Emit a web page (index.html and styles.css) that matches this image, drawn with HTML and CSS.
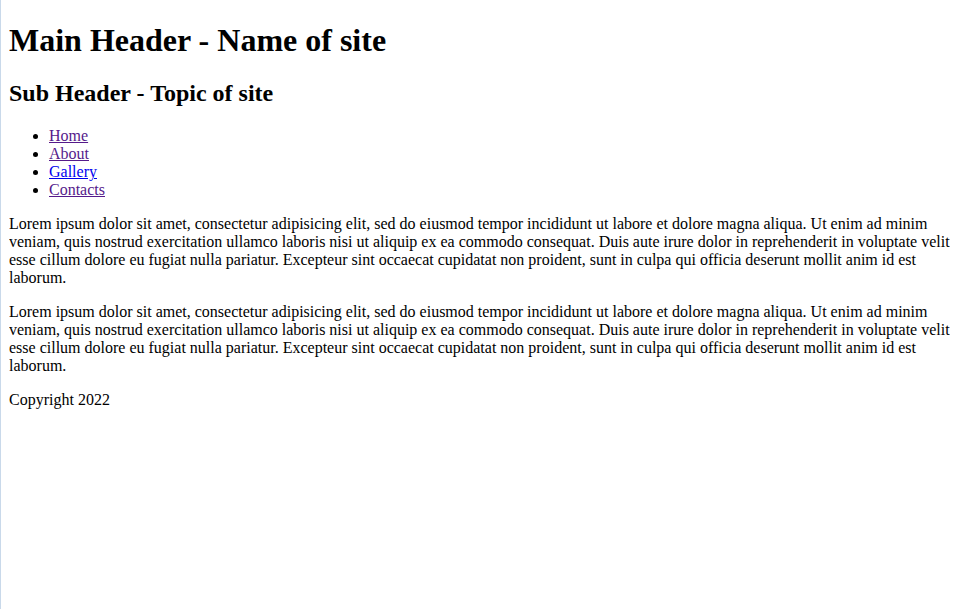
FILE: index.html
```html
<!DOCTYPE html>
<html lang="en">
<head>
<meta charset="utf-8">
<title>Name of site</title>
<link rel="stylesheet" href="styles.css">
</head>
<body>
<header>
<h1 class="site-title">Main Header - Name of site</h1>
<h2>Sub Header - Topic of site</h2>
<nav>
<ul>
<li><a class="visited" href="#home">Home</a></li>
<li><a class="visited" href="#about">About</a></li>
<li><a class="link" href="#gallery">Gallery</a></li>
<li><a class="visited" href="#contacts">Contacts</a></li>
</ul>
</nav>
</header>
<main>
<p>Lorem ipsum dolor sit amet, consectetur adipisicing elit, sed do eiusmod tempor incididunt ut labore et dolore magna aliqua. Ut enim ad minim veniam, quis nostrud exercitation ullamco laboris nisi ut aliquip ex ea commodo consequat. Duis aute irure dolor in reprehenderit in voluptate velit esse cillum dolore eu fugiat nulla pariatur. Excepteur sint occaecat cupidatat non proident, sunt in culpa qui officia deserunt mollit anim id est laborum.</p>
<p>Lorem ipsum dolor sit amet, consectetur adipisicing elit, sed do eiusmod tempor incididunt ut labore et dolore magna aliqua. Ut enim ad minim veniam, quis nostrud exercitation ullamco laboris nisi ut aliquip ex ea commodo consequat. Duis aute irure dolor in reprehenderit in voluptate velit esse cillum dolore eu fugiat nulla pariatur. Excepteur sint occaecat cupidatat non proident, sunt in culpa qui officia deserunt mollit anim id est laborum.</p>
</main>
<footer>
<p>Copyright 2022</p>
</footer>
</body>
</html>
```
FILE: styles.css
```css
html {
  min-height: 100%;
  border-left: 1px solid #c9d9ea;
  background: #ffffff;
}
body {
  font-family: "Liberation Serif", "Times New Roman", serif;
  color: #000000;
}
.site-title {
  margin-top: 14px;
}
a.visited {
  color: #551a8b;
}
a.link {
  color: #0000ee;
}
```
